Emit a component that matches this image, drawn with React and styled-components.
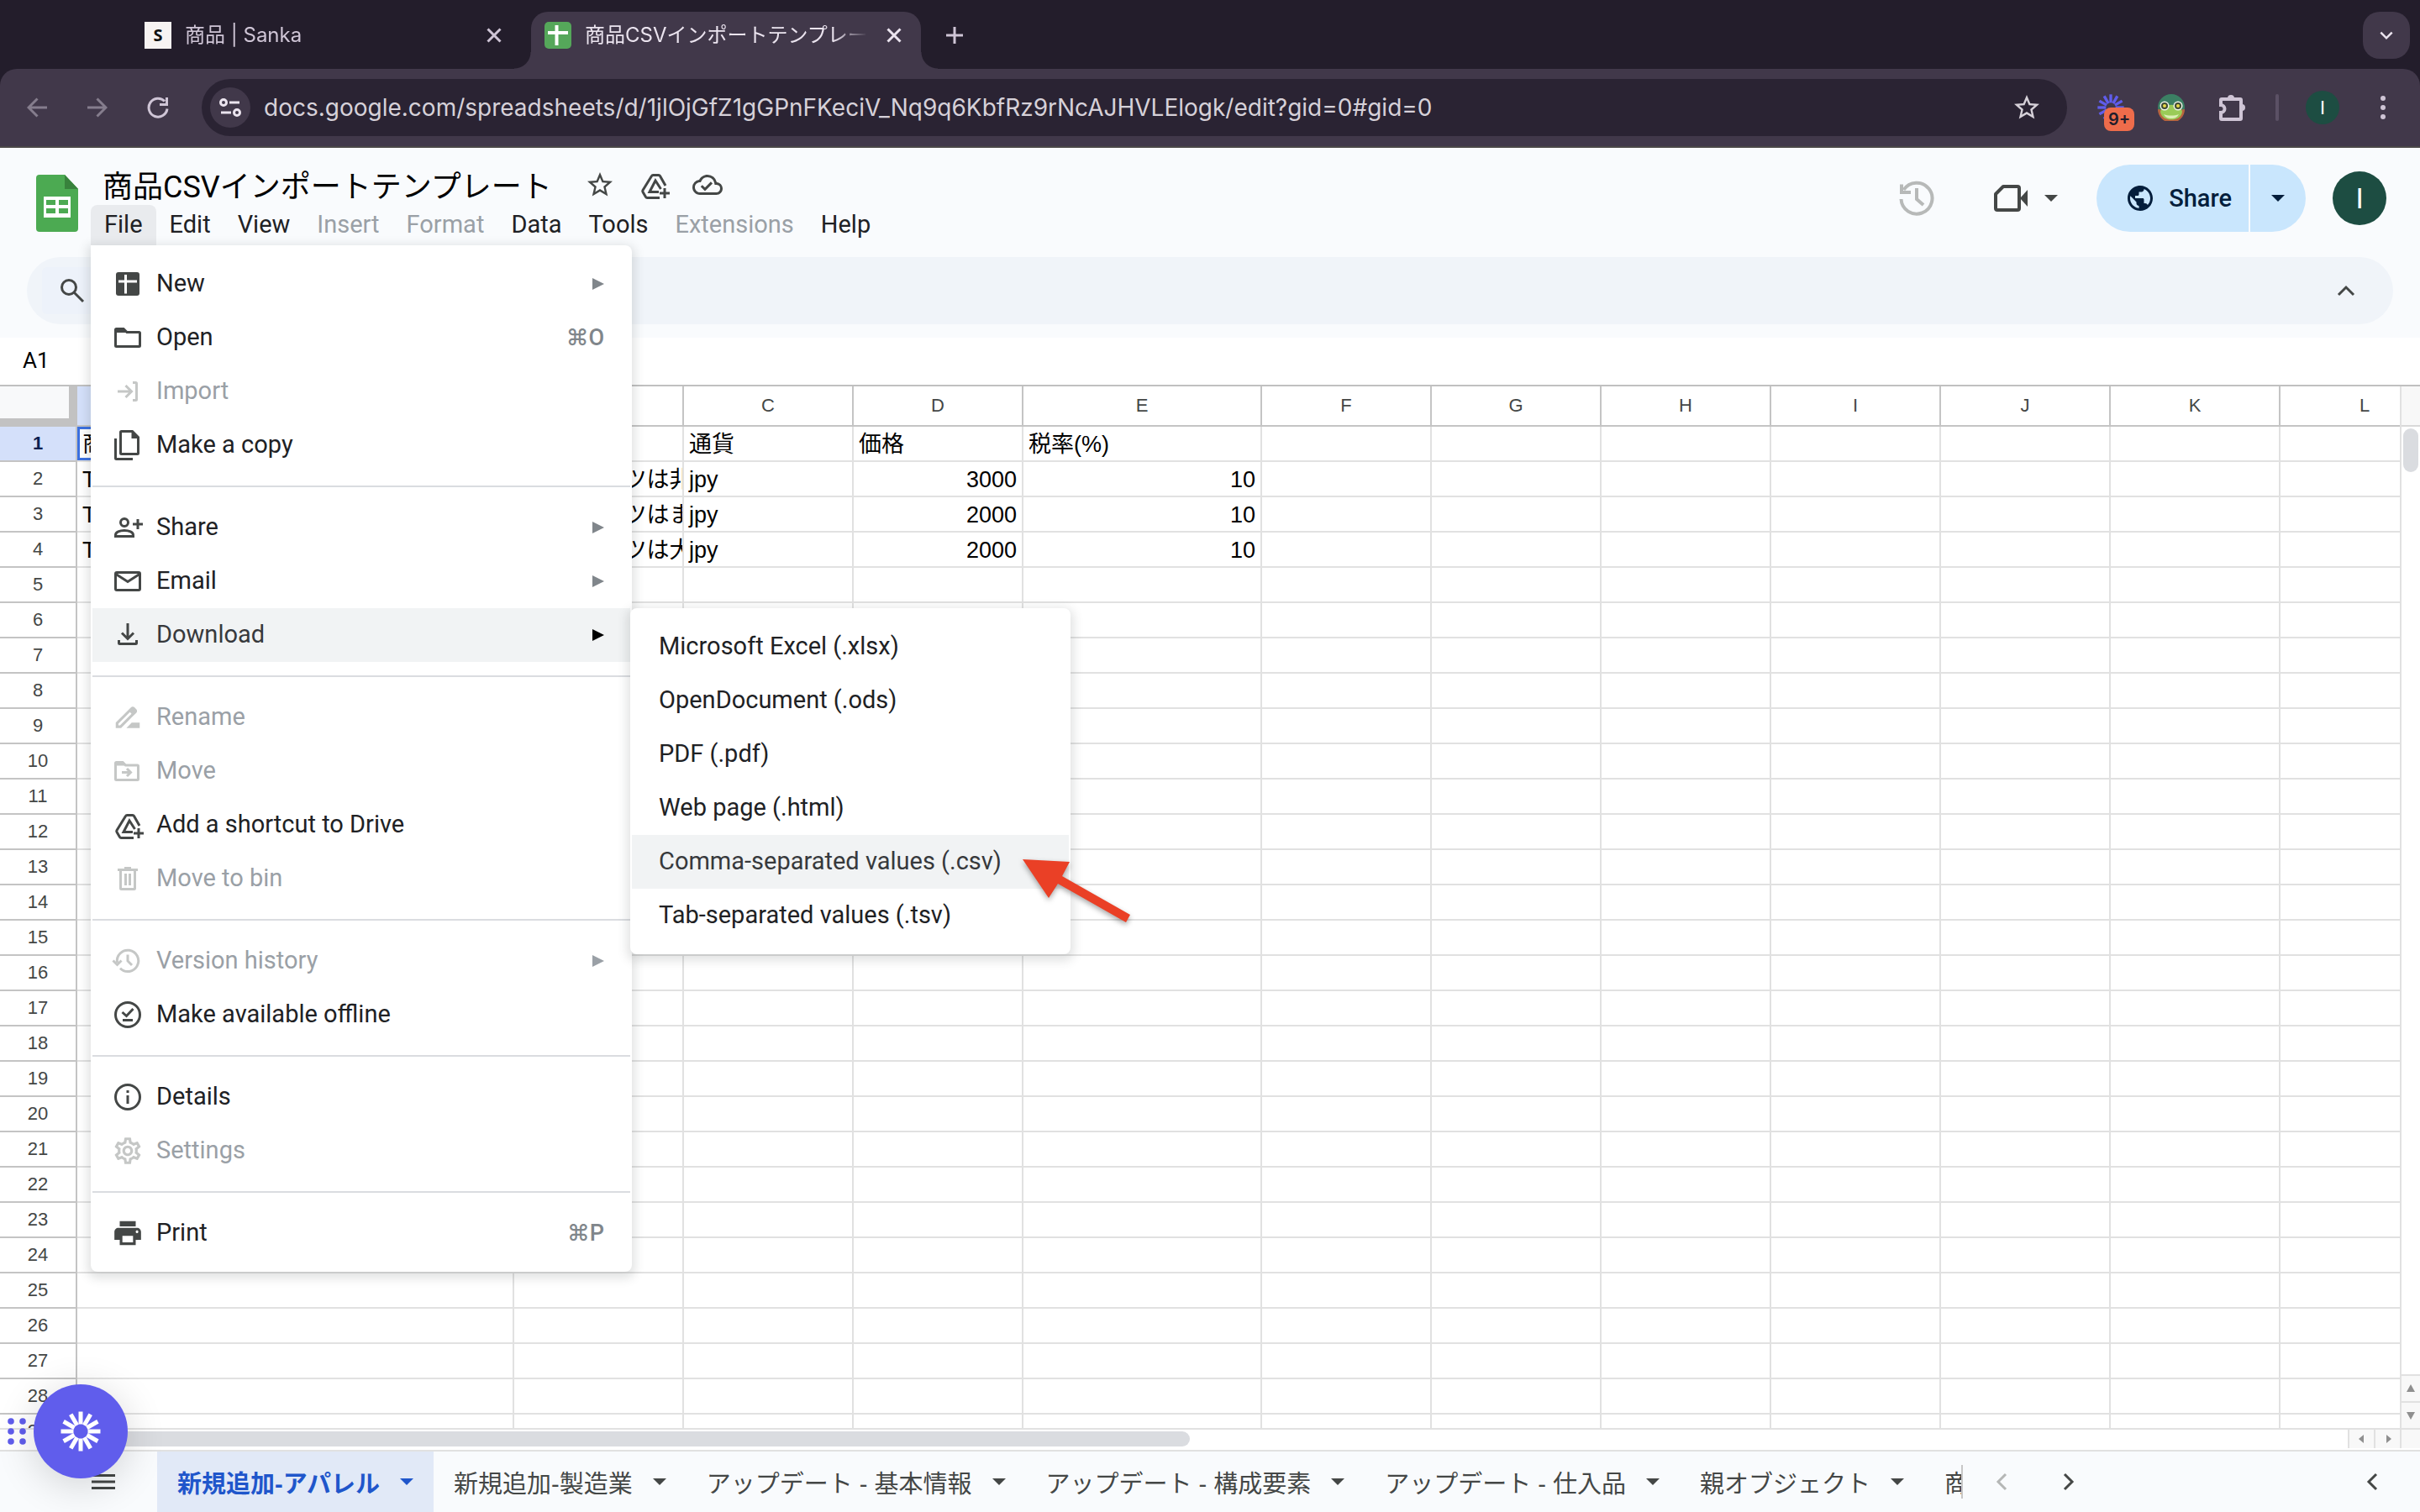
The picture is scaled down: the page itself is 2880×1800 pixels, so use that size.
import React from "react";
import styled, { createGlobalStyle, css } from "styled-components";
import {
  MdStarBorder,
  MdOutlineCloudDone,
  MdPublic,
  MdDriveFileRenameOutline,
  MdOutlineSettings,
  MdPrint,
} from "react-icons/md";

const UI = `Roboto, "Noto Sans CJK JP", sans-serif`;
const CHROME = `Inter, "Noto Sans CJK JP", sans-serif`;
const SHEET = `"Liberation Sans", "Noto Sans CJK JP", sans-serif`;

const GlobalStyle = createGlobalStyle`
  *, *::before, *::after { box-sizing: border-box; }
  body { margin: 0; background: #fff; font-family: ${UI}; }
  button, input { font: inherit; color: inherit; border: 0; margin: 0; padding: 0; background: none; outline: 0; }
  ul { list-style: none; margin: 0; padding: 0; }
  svg { display: block; flex: none; }
`;

const Page = styled.div`
  position: relative;
  display: flex;
  flex-direction: column;
  height: 100vh;
  overflow: hidden;
  background: #fff;
`;

/* ---------- browser chrome ---------- */

const TabStrip = styled.div`
  display: flex;
  align-items: flex-start;
  gap: 12px;
  height: 82px;
  padding: 14px 12px 0 156px;
  background: #231d2b;
  font-family: ${CHROME};
  font-size: 24px;
  color: #cfc5d6;
`;

const BrowserTab = styled.div`
  position: relative;
  display: flex;
  align-items: center;
  gap: 16px;
  width: 464px;
  height: 56px;
  padding: 0 16px;
  ${(p) =>
    p.$active &&
    css`
      height: 68px;
      padding-bottom: 12px;
      border-radius: 20px 20px 0 0;
      background: #41384a;
      color: #ebe4ef;
      &::before,
      &::after {
        content: "";
        position: absolute;
        bottom: 0;
        width: 20px;
        height: 20px;
      }
      &::before {
        right: 100%;
        background: radial-gradient(circle at 0 0, transparent 19px, #41384a 20px);
      }
      &::after {
        left: 100%;
        background: radial-gradient(circle at 100% 0, transparent 19px, #41384a 20px);
      }
    `}
`;

const TabTitle = styled.span`
  flex: 1;
  min-width: 0;
  overflow: hidden;
  white-space: nowrap;
  line-height: 36px;
  mask-image: linear-gradient(to right, #000 88%, transparent);
`;

const TabClose = styled.button`
  display: grid;
  place-items: center;
  width: 32px;
  height: 32px;
`;

const NewTab = styled.button`
  display: grid;
  place-items: center;
  width: 56px;
  height: 56px;
`;

const TabSearch = styled.button`
  display: grid;
  place-items: center;
  width: 56px;
  height: 56px;
  margin-left: auto;
  border-radius: 20px;
  background: #41384a;
  color: #ebe4ef;
`;

const ToolbarBack = styled.div`
  background: #231d2b;
`;

const BrowserToolbar = styled.div`
  display: flex;
  align-items: center;
  height: 94px;
  padding: 0 8px;
  border-bottom: 2px solid #4b4848;
  border-radius: 20px 20px 0 0;
  background: #41384a;
  color: #cfc5d6;
  font-family: ${CHROME};
`;

const ChromeButton = styled.button`
  position: relative;
  display: grid;
  place-items: center;
  width: 72px;
  height: 68px;
  color: ${(p) => (p.$dim ? "#857d8d" : "inherit")};
`;

const Omnibox = styled.div`
  flex: 1;
  display: flex;
  align-items: center;
  gap: 16px;
  height: 68px;
  margin: 0 16px;
  padding: 0 28px 0 10px;
  border-radius: 34px;
  background: #2a2333;
  color: #d6d1d9;
`;

const SiteInfo = styled.button`
  display: grid;
  place-items: center;
  width: 48px;
  height: 48px;
  border-radius: 50%;
  background: #41384a;
  color: #ebe4ef;
`;

const UrlInput = styled.input`
  flex: 1;
  min-width: 0;
  height: 48px;
  font-size: 28px;
`;

const PlainButton = styled.button`
  display: grid;
  place-items: center;
  width: 40px;
  height: 40px;
`;

const ExtBadge = styled.span`
  position: absolute;
  right: 8px;
  bottom: 6px;
  width: 36px;
  height: 28px;
  border-radius: 8px;
  background: #ee6c4b;
  color: #231d2b;
  font-size: 20px;
  font-weight: 600;
  line-height: 28px;
  text-align: center;
`;

const ChromeDivider = styled.span`
  width: 4px;
  height: 32px;
  margin: 0 16px;
  border-radius: 2px;
  background: #5b5165;
`;

const Avatar = styled.span`
  display: grid;
  place-items: center;
  width: ${(p) => p.$size}px;
  height: ${(p) => p.$size}px;
  border-radius: 50%;
  background: #1d4d42;
  color: #fff;
  font-family: ${UI};
  font-size: ${(p) => (p.$size > 50 ? 34 : 22)}px;
`;

/* ---------- document header ---------- */

const DocTop = styled.header`
  background: #f9fbfd;
  padding-bottom: 16px;
`;

const DocHeader = styled.div`
  display: flex;
  height: 130px;
  padding: 20px 40px 0 43px;
`;

const LogoLink = styled.a`
  width: 50px;
  margin: 12px 15px 0 0;
`;

const TitleBlock = styled.div`
  display: flex;
  flex-direction: column;
`;

const TitleRow = styled.div`
  display: flex;
  align-items: center;
  height: 48px;
  padding-left: 14px;
  gap: 24px;
  color: #444746;
`;

const TitleInput = styled.input`
  width: 548px;
  height: 48px;
  padding-bottom: 3px;
  color: #000;
  font-size: 36px;
`;

const TitleButton = styled.button`
  display: grid;
  place-items: center;
  width: 40px;
  height: 40px;
`;

const MenuBar = styled.ul`
  display: flex;
`;

const MenuBarItem = styled.li`
  position: relative;
`;

const MenuBarButton = styled.button`
  height: 48px;
  padding: 0 16px 2px;
  border-radius: 8px 8px 0 0;
  background: ${(p) => (p.$open ? "#e9ebee" : "transparent")};
  color: #202124;
  font-size: 29px;
  &:disabled {
    color: #9aa0a6;
  }
`;

const HeaderActions = styled.div`
  display: flex;
  align-items: center;
  gap: 32px;
  height: 80px;
  margin-left: auto;
`;

const HistoryButton = styled.button`
  display: grid;
  place-items: center;
  width: 80px;
  height: 80px;
  color: #b7b9b8;
`;

const MeetButton = styled.button`
  display: flex;
  align-items: center;
  gap: 19px;
  height: 80px;
  padding: 0 14px 0 19px;
  color: #444746;
`;

const Caret = styled.span`
  flex: none;
  border: 8px solid transparent;
  border-top-color: currentColor;
  border-bottom: 0;
`;

const ShareGroup = styled.div`
  display: flex;
  gap: 2px;
  height: 80px;
  border-radius: 40px;
  overflow: hidden;
  color: #041e3c;
`;

const ShareButton = styled.button`
  display: flex;
  align-items: center;
  gap: 16px;
  padding: 0 20px 0 34px;
  background: #c9e6fd;
  font-size: 29px;
  font-weight: 500;
`;

const ShareMore = styled.button`
  display: grid;
  place-items: center;
  width: 66px;
  background: #c9e6fd;
`;

const ActionBar = styled.div`
  display: flex;
  align-items: center;
  justify-content: space-between;
  height: 80px;
  margin: 0 32px;
  padding: 0 36px 0 18px;
  border-radius: 40px;
  background: #f0f4f9;
  color: #444746;
`;

const SearchMenus = styled.button`
  display: flex;
  align-items: center;
  width: 200px;
  height: 56px;
  padding-left: 20px;
  border-radius: 6px;
  background: #edf2fa;
`;

/* ---------- dropdown menus ---------- */

const MenuPanel = styled.div`
  position: absolute;
  z-index: 5;
  left: ${(p) => (p.$sub ? "100%" : "0")};
  top: ${(p) => (p.$sub ? "0" : "48px")};
  width: ${(p) => (p.$sub ? 524 : 644)}px;
  padding: 14px 2px;
  border-radius: ${(p) => (p.$sub ? "8px" : "0 8px 8px 8px")};
  background: #fff;
  box-shadow: 0 4px 12px 4px rgba(60, 64, 67, 0.15);
`;

const MenuGroup = styled.ul`
  & + & {
    margin-top: 16px;
    padding-top: 16px;
    border-top: 2px solid #dadce0;
  }
`;

const MenuItem = styled.li`
  position: relative;
`;

const MenuItemButton = styled.button`
  display: flex;
  align-items: center;
  width: 100%;
  height: 64px;
  padding: 0 31px 0 ${(p) => (p.$sub ? 32 : 22)}px;
  background: ${(p) => (p.$hover ? "#f1f3f4" : "transparent")};
  color: ${(p) => (p.$hover ? "#37393c" : "#202124")};
  font-size: 29px;
  text-align: left;
  white-space: nowrap;
  svg {
    width: 40px;
    margin-right: 14px;
    color: #444746;
  }
  &:disabled {
    color: #9aa0a6;
  }
  &:disabled svg {
    color: #c5c7c6;
  }
`;

const MenuLabel = styled.span`
  padding-bottom: 2px;
`;

const Shortcut = styled.kbd`
  margin-left: auto;
  padding-bottom: 2px;
  color: #80868b;
  font-family: Roboto, Inter, sans-serif;
  font-size: 27px;
  font-weight: 500;
`;

const SubArrow = styled.span`
  margin-left: auto;
  border: 7px solid transparent;
  border-left: 14px solid ${(p) => p.$tone};
  border-right: 0;
`;

const Pointer = styled.svg`
  position: absolute;
  z-index: 6;
  left: 460px;
  top: 24px;
  filter: drop-shadow(0 3px 3px rgba(0, 0, 0, 0.35));
`;

/* ---------- sheet ---------- */

const FormulaBar = styled.div`
  display: flex;
  height: 58px;
  padding-bottom: 2px;
  border-bottom: 2px solid #c0c0c0;
`;

const NameBox = styled.input`
  width: 200px;
  padding-left: 27px;
  font-size: 26px;
  color: #000;
`;

const FormulaInput = styled.input`
  flex: 1;
  min-width: 0;
`;

const GridArea = styled.div`
  flex: 1;
  min-height: 0;
  display: flex;
`;

const GridView = styled.main`
  flex: 1;
  min-width: 0;
  overflow: hidden;
`;

const Sheet = styled.table`
  width: 2916px;
  table-layout: fixed;
  border-collapse: separate;
  border-spacing: 0;
  font-family: ${SHEET};
`;

const Corner = styled.td`
  height: 48px;
  padding: 0;
  border-right: 10px solid #c2c2c2;
  border-bottom: 10px solid #c2c2c2;
  background: #f8f9fa;
`;

const ColHead = styled.th`
  height: 48px;
  padding: 0;
  border-right: 2px solid #c4c4c4;
  border-bottom: 2px solid #c4c4c4;
  background: ${(p) => (p.$selected ? "#d4e0fa" : "#fff")};
  color: #444746;
  font-size: 22px;
  font-weight: 400;
  line-height: 46px;
`;

const RowHead = styled.th`
  padding: 0;
  border-right: 2px solid #c4c4c4;
  border-bottom: 2px solid #c4c4c4;
  background: ${(p) => (p.$selected ? "#d4e0fa" : "#fff")};
  color: ${(p) => (p.$selected ? "#0b1f4f" : "#444746")};
  font-size: 22px;
  font-weight: ${(p) => (p.$selected ? 700 : 400)};
  line-height: 38px;
  height: 42px;
`;

const Cell = styled.td`
  height: 42px;
  padding: 2px 6px 0;
  border-right: 2px solid #e1e1e1;
  border-bottom: 2px solid #e1e1e1;
  color: #000;
  font-size: 27px;
  line-height: 38px;
  text-align: ${(p) => (p.$num ? "right" : "left")};
  white-space: nowrap;
  overflow: hidden;
  ${(p) =>
    p.$selected &&
    css`
      box-shadow: inset 0 0 0 3px #3b70e0;
    `}
`;

const VScroll = styled.div`
  display: flex;
  flex-direction: column;
  width: 24px;
  border-left: 2px solid #e1e1e1;
`;

const VScrollHead = styled.div`
  height: 48px;
  border-bottom: 2px solid #d9d9d9;
  background: #f8f8f8;
`;

const VThumb = styled.div`
  height: 52px;
  margin: 2px 2px auto;
  border-radius: 9px;
  background: #dadce0;
`;

const ScrollStep = styled.button`
  display: grid;
  place-items: center;
  background: #f8f8f8;
  color: #8f8f8f;
  ${(p) =>
    p.$side
      ? css`
          width: 31px;
          border-left: 2px solid #e1e1e1;
        `
      : css`
          height: 32px;
          border-top: 2px solid #e1e1e1;
        `}
`;

const HScroll = styled.div`
  display: flex;
  height: 28px;
  padding-bottom: 2px;
  border-top: 2px solid #e1e1e1;
  border-bottom: 2px solid #e1e1e1;
`;

const HTrack = styled.div`
  flex: 1;
  padding: 2px 0 2px 92px;
`;

const HThumb = styled.div`
  width: 49%;
  height: 18px;
  border-radius: 9px;
  background: #dadce0;
`;

const ScrollCorner = styled.div`
  width: 24px;
  border-left: 2px solid #e1e1e1;
  background: #f8f8f8;
`;

/* ---------- sheet tabs ---------- */

const SheetBar = styled.footer`
  display: flex;
  align-items: center;
  height: 72px;
  padding-left: 87px;
  background: #f9fbfd;
  color: #444746;
`;

const AllSheets = styled.button`
  display: grid;
  place-items: center;
  width: 72px;
  height: 72px;
  margin-right: 28px;
`;

const SheetTabs = styled.div`
  flex: 1;
  display: flex;
  min-width: 0;
  overflow: hidden;
`;

const SheetTab = styled.button`
  flex: none;
  display: flex;
  align-items: center;
  gap: 24px;
  height: 72px;
  padding: 0 24px;
  background: ${(p) => (p.$active ? "#e1e9f7" : "transparent")};
  color: ${(p) => (p.$active ? "#1f56cb" : "#444746")};
  font-family: ${SHEET};
  font-size: 29px;
  font-weight: ${(p) => (p.$active ? 700 : 400)};
  white-space: nowrap;
`;

const SheetNav = styled.div`
  display: flex;
  align-items: center;
  width: 546px;
  padding-right: 17px;
`;

const NavDivider = styled.span`
  width: 2px;
  height: 40px;
  margin-right: 6px;
  background: #c7c7c7;
`;

const NavButton = styled.button`
  display: grid;
  place-items: center;
  width: 80px;
  height: 72px;
  margin-left: ${(p) => (p.$end ? "auto" : "0")};
  color: ${(p) => (p.$dim ? "#b5b7b6" : "#444746")};
`;

/* ---------- floating assistant ---------- */

const Assistant = styled.div`
  position: absolute;
  z-index: 8;
  left: 8px;
  bottom: 40px;
  display: flex;
  align-items: center;
  gap: 8px;
`;

const AssistantButton = styled.button`
  display: grid;
  place-items: center;
  width: 112px;
  height: 112px;
  border-radius: 50%;
  background: #605dec;
  box-shadow: 0 8px 48px rgba(0, 0, 0, 0.16);
`;

/* ---------- drawings ---------- */

const Line = ({ size = 40, box = size, w = 3, children }) => (
  <svg width={size} height={size} viewBox={`0 0 ${box} ${box}`} fill="none" stroke="currentColor" strokeWidth={w}>
    {children}
  </svg>
);

const IconNew = () => (
  <Line>
    <rect x="6" y="6" width="28" height="28" rx="3" fill="currentColor" stroke="none" />
    <path d="M17.500 9v22.500M9 17h22" stroke="#fff" />
  </Line>
);
const IconFolder = () => (
  <Line>
    <path d="M5.500 12V10.500a1 1 0 0 1 1-1H15l4 4h14.500a1 1 0 0 1 1 1v15a1 1 0 0 1-1 1h-27a1 1 0 0 1-1-1z" />
    <path d="M5 9h10l4.500 5H5z" fill="currentColor" stroke="none" />
  </Line>
);
const IconImport = () => (
  <Line>
    <path d="M8 20h16M17.500 13l7 7-7 7M26 9.500h3.500a1 1 0 0 1 1 1v19a1 1 0 0 1-1 1H26" />
  </Line>
);
const IconCopy = () => (
  <Line>
    <path d="M12.500 3.500h13l7 7v19a1 1 0 0 1-1 1h-19a1 1 0 0 1-1-1v-25a1 1 0 0 1 1-1z" />
    <path d="M24.500 3.500v8.500H33z" fill="currentColor" stroke="none" />
    <path d="M5.500 12v23.500a1 1 0 0 0 1 1H26" />
  </Line>
);
const IconPersonAdd = () => (
  <Line>
    <circle cx="16" cy="14" r="4.500" />
    <path d="M5.500 30.500v-1.500c0-3.500 5-5.500 10.500-5.500s10.500 2 10.500 5.500v1.500zM32 10v12M26 16h12" />
  </Line>
);
const IconMail = () => (
  <Line>
    <rect x="5.500" y="9.500" width="29" height="21" rx="1.500" />
    <path d="M6 11.500l14 9 14-9" />
  </Line>
);
const IconDownload = () => (
  <Line>
    <path d="M20 6v18M13 17.500l7 7 7-7M9.500 26v3.500a1 1 0 0 0 1 1h19a1 1 0 0 0 1-1V26" />
  </Line>
);
const IconMove = () => (
  <Line>
    <path d="M5.500 12V10.500a1 1 0 0 1 1-1H14l3.500 3.500h14a1 1 0 0 1 1 1v15.500a1 1 0 0 1-1 1h-25a1 1 0 0 1-1-1z" />
    <path d="M5 9h9.500l4 4.500H5z" fill="currentColor" stroke="none" />
    <path d="M13 21.500h10M19 17l4.500 4.500-4.500 4.500" />
  </Line>
);
const IconDriveAdd = () => (
  <Line>
    <path d="M34 21L27.500 9.500a2 2 0 0 0-1.700-1h-6.600a2 2 0 0 0-1.700 1L7 26.500a2 2 0 0 0 0 2l3.500 6a2 2 0 0 0 1.700 1H27" />
    <path d="M28.500 25L22 15l-7 13.500h11M33 24v12M27 30h12" />
  </Line>
);
const IconTrash = () => (
  <Line>
    <path d="M8 9.500h24M16 7.500h8M11.500 10v21.500a1 1 0 0 0 1 1h15a1 1 0 0 0 1-1V10M17.500 14v14M22.500 14v14" />
  </Line>
);
const IconVersion = () => (
  <Line>
    <path d="M7.500 22A12.700 12.700 0 1 1 11 28.800M20 12.500V20l5 5M2.500 19.500l5 5 5-5" />
  </Line>
);
const IconOffline = () => (
  <Line>
    <circle cx="20" cy="20" r="14.500" />
    <path d="M13.500 17l5 4.500 8-8.500M14 26.500h12" />
  </Line>
);
const IconInfo = () => (
  <Line>
    <circle cx="20" cy="20" r="14.500" />
    <path d="M20 18v10M20 12v3" />
  </Line>
);
const IconCross = ({ size = 20 }) => (
  <Line size={size} box={20}>
    <path d="M2.500 2.500l15 15M17.500 2.500l-15 15" />
  </Line>
);
const Chevron = ({ d, size = 24 }) => (
  <Line size={size} box={24}>
    <path d={{ up: "M3 17l9-9 9 9", down: "M4 8l8 8 8-8", left: "M17 3l-9 9 9 9", right: "M7 3l9 9-9 9" }[d]} />
  </Line>
);
const Tri = ({ d }) => (
  <svg width="12" height="12" viewBox="0 0 12 12" fill="currentColor">
    <path d={{ up: "M6 1l5 9H1z", down: "M6 11L1 2h10z", left: "M2 6l6-5v10z", right: "M10 6L4 1v10z" }[d]} />
  </svg>
);

const Burst = ({ size, color, count = 12 }) => (
  <svg width={size} height={size} viewBox="-24 -24 48 48" stroke={color} strokeWidth="5">
    {Array.from({ length: count }, (_, i) => (
      <line key={i} x1="0" y1="-8.500" x2="0" y2="-23.500" transform={`rotate(${i * 30})`} />
    ))}
  </svg>
);

const FrogIcon = () => (
  <svg width="32" height="32" viewBox="0 0 32 32">
    <circle cx="16" cy="16" r="16" fill="#3b7f63" />
    <path d="M0 18c4 1 28 1 32 0a16 16 0 0 1-32 0z" fill="#b8643e" />
    <path d="M3 21c2-11 24-11 26 0-1 7-7 9.500-13 9.500S4 28 3 21z" fill="#9acb57" />
    <path d="M7 24c5 2 13 2 18 0-2 4-5 5-9 5s-7-1-9-5z" fill="#dbeeb4" />
    <circle cx="8" cy="14" r="5.500" fill="#eef3ea" />
    <circle cx="24" cy="14" r="5.500" fill="#eef3ea" />
    <circle cx="8" cy="14" r="4" fill="#3f4b32" />
    <circle cx="24" cy="14" r="4" fill="#3f4b32" />
    <circle cx="8" cy="14" r="2" fill="#e8d94a" />
    <circle cx="24" cy="14" r="2" fill="#e8d94a" />
  </svg>
);

const SheetsLogo = () => (
  <svg width="50" height="68" viewBox="0 0 50 68">
    <path d="M4 0h30l16 17v47a4 4 0 0 1-4 4H4a4 4 0 0 1-4-4V4a4 4 0 0 1 4-4z" fill="#4caa52" />
    <path d="M34 0l16 17H34z" fill="#38823c" />
    <path fillRule="evenodd" d="M9 26h32v25H9zM12 30v6h11v-6zM27 30v6h11v-6zM12 40v6h11v-6zM27 40v6h11v-6z" fill="#fff" />
  </svg>
);

/* ---------- data ---------- */

const fileMenu = [
  [
    { label: "New", icon: IconNew, arrow: true },
    { label: "Open", icon: IconFolder, keys: "⌘O" },
    { label: "Import", icon: IconImport, disabled: true },
    { label: "Make a copy", icon: IconCopy },
  ],
  [
    { label: "Share", icon: IconPersonAdd, arrow: true },
    { label: "Email", icon: IconMail, arrow: true },
    { label: "Download", icon: IconDownload, arrow: true, open: true },
  ],
  [
    { label: "Rename", icon: () => <MdDriveFileRenameOutline size={38} />, disabled: true },
    { label: "Move", icon: IconMove, disabled: true },
    { label: "Add a shortcut to Drive", icon: IconDriveAdd },
    { label: "Move to bin", icon: IconTrash, disabled: true },
  ],
  [
    { label: "Version history", icon: IconVersion, arrow: true, disabled: true },
    { label: "Make available offline", icon: IconOffline },
  ],
  [
    { label: "Details", icon: IconInfo },
    { label: "Settings", icon: () => <MdOutlineSettings size={38} />, disabled: true },
  ],
  [{ label: "Print", icon: () => <MdPrint size={38} />, keys: "⌘P" }],
];

const downloadFormats = [
  "Microsoft Excel (.xlsx)",
  "OpenDocument (.ods)",
  "PDF (.pdf)",
  "Web page (.html)",
  "Comma-separated values (.csv)",
  "Tab-separated values (.tsv)",
];

const columns = [
  ["A", 520],
  ["B", 202],
  ["C", 202],
  ["D", 202],
  ["E", 284],
  ...["F", "G", "H", "I", "J", "K", "L"].map((c) => [c, 202]),
];

const rows = [
  ["商品名", "商品説明", "通貨", "価格", "税率(%)"],
  ["Tシャツ 1", "このTシャツは非常に", "jpy", 3000, 10],
  ["Tシャツ 2", "このTシャツはまさに", "jpy", 2000, 10],
  ["Tシャツ 3", "このTシャツは大人気", "jpy", 2000, 10],
];

const sheetNames = [
  "新規追加-アパレル",
  "新規追加-製造業",
  "アップデート - 基本情報",
  "アップデート - 構成要素",
  "アップデート - 仕入品",
  "親オブジェクト",
  "商品グループ",
];

const docMenus = ["File", "Edit", "View", "Insert", "Format", "Data", "Tools", "Extensions", "Help"];
const disabledMenus = ["Insert", "Format", "Extensions"];

/* ---------- parts ---------- */

function DownloadMenu() {
  return (
    <MenuPanel $sub role="menu">
      <MenuGroup>
        {downloadFormats.map((name) => {
          const hover = name.includes(".csv");
          return (
            <MenuItem key={name}>
              <MenuItemButton $sub $hover={hover}>
                <MenuLabel>{name}</MenuLabel>
              </MenuItemButton>
              {hover && (
                <Pointer width="140" height="90" viewBox="0 0 140 90" aria-hidden="true">
                  <path d="M5 5l56 3-9 17 81 46-5 9-81-46-11 17z" fill="#ea4026" />
                </Pointer>
              )}
            </MenuItem>
          );
        })}
      </MenuGroup>
    </MenuPanel>
  );
}

function FileMenu() {
  return (
    <MenuPanel role="menu">
      {fileMenu.map((group) => (
        <MenuGroup key={group[0].label}>
          {group.map(({ label, icon: Icon, arrow, keys, disabled, open }) => (
            <MenuItem key={label}>
              <MenuItemButton disabled={disabled} $hover={open}>
                <Icon />
                <MenuLabel>{label}</MenuLabel>
                {keys && <Shortcut>{keys}</Shortcut>}
                {arrow && <SubArrow $tone={open ? "#000" : disabled ? "#9aa0a6" : "#80868b"} />}
              </MenuItemButton>
              {open && <DownloadMenu />}
            </MenuItem>
          ))}
        </MenuGroup>
      ))}
    </MenuPanel>
  );
}

function BrowserChrome() {
  return (
    <>
      <TabStrip>
        <BrowserTab>
          <svg width="32" height="32" viewBox="0 0 32 32">
            <rect width="32" height="32" fill="#f7f3f2" />
            <text x="16" y="23" fontFamily="Open Sans, sans-serif" fontWeight="700" fontSize="20" textAnchor="middle" fill="#111">S</text>
          </svg>
          <TabTitle>商品 | Sanka</TabTitle>
          <TabClose aria-label="Close tab"><IconCross /></TabClose>
        </BrowserTab>
        <BrowserTab $active>
          <svg width="32" height="32" viewBox="0 0 32 32">
            <rect width="32" height="32" rx="5" fill="#55a75a" />
            <path d="M14.500 4v24M4 13h24" stroke="#fff" strokeWidth="4" />
          </svg>
          <TabTitle>商品CSVインポートテンプレート</TabTitle>
          <TabClose aria-label="Close tab"><IconCross /></TabClose>
        </BrowserTab>
        <NewTab aria-label="New tab">
          <Line size={20}><path d="M10 0v20M0 10h20" /></Line>
        </NewTab>
        <TabSearch aria-label="Search tabs"><Chevron d="down" size={20} /></TabSearch>
      </TabStrip>
      <ToolbarBack>
        <BrowserToolbar>
          <ChromeButton $dim aria-label="Back">
            <Line size={24}><path d="M24 12H2M12.500 1.500L2 12l10.500 10.500" /></Line>
          </ChromeButton>
          <ChromeButton $dim aria-label="Forward">
            <Line size={24}><path d="M0 12h22M11.500 1.500L22 12 11.500 22.500" /></Line>
          </ChromeButton>
          <ChromeButton aria-label="Reload">
            <Line size={26}><path d="M24 14.500A11 11 0 1 1 21 5.500M23.500 1v8.500H15" /></Line>
          </ChromeButton>
          <Omnibox>
            <SiteInfo aria-label="Site information">
              <Line size={26}>
                <circle cx="5" cy="7" r="3.500" /><path d="M12 7h12" />
                <circle cx="21" cy="19" r="3.500" /><path d="M2 19h12" />
              </Line>
            </SiteInfo>
            <UrlInput
              aria-label="Address"
              defaultValue="docs.google.com/spreadsheets/d/1jlOjGfZ1gGPnFKeciV_Nq9q6KbfRz9rNcAJHVLElogk/edit?gid=0#gid=0"
            />
            <PlainButton aria-label="Bookmark"><MdStarBorder size={36} /></PlainButton>
          </Omnibox>
          <ChromeButton aria-label="Assistant extension">
            <Burst size={32} color="#605dec" />
            <ExtBadge>9+</ExtBadge>
          </ChromeButton>
          <ChromeButton aria-label="Frog extension"><FrogIcon /></ChromeButton>
          <ChromeButton aria-label="Extensions">
            <Line size={34} w={4}>
              <path d="M4 8a1 1 0 0 1 1-1h22a1 1 0 0 1 1 1v22a1 1 0 0 1-1 1H5a1 1 0 0 1-1-1v-7a4.500 4.500 0 0 0 0-9z" />
              <path d="M12 6a4 4 0 0 1 8 0zM29 13a4 4 0 0 1 0 8z" fill="currentColor" stroke="none" />
            </Line>
          </ChromeButton>
          <ChromeDivider />
          <ChromeButton aria-label="Profile"><Avatar $size={40}>I</Avatar></ChromeButton>
          <ChromeButton aria-label="Browser menu">
            <svg width="8" height="30" viewBox="0 0 8 30" fill="currentColor">
              <circle cx="4" cy="4" r="3" /><circle cx="4" cy="15" r="3" /><circle cx="4" cy="26" r="3" />
            </svg>
          </ChromeButton>
        </BrowserToolbar>
      </ToolbarBack>
    </>
  );
}

function DocumentHeader() {
  return (
    <DocTop>
      <DocHeader>
        <LogoLink href="#home" aria-label="Sheets home"><SheetsLogo /></LogoLink>
        <TitleBlock>
          <TitleRow>
            <TitleInput aria-label="Document title" defaultValue="商品CSVインポートテンプレート" />
            <TitleButton aria-label="Star"><MdStarBorder size={36} /></TitleButton>
            <TitleButton aria-label="Add shortcut to Drive"><IconDriveAdd /></TitleButton>
            <TitleButton aria-label="Document status"><MdOutlineCloudDone size={36} /></TitleButton>
          </TitleRow>
          <MenuBar>
            {docMenus.map((name) => (
              <MenuBarItem key={name}>
                <MenuBarButton $open={name === "File"} disabled={disabledMenus.includes(name)}>{name}</MenuBarButton>
                {name === "File" && <FileMenu />}
              </MenuBarItem>
            ))}
          </MenuBar>
        </TitleBlock>
        <HeaderActions>
          <HistoryButton aria-label="Version history">
            <Line size={44} w={4}>
              <path d="M3.500 23A18.500 18.500 0 1 0 6.500 12M4 5.500V15h11M22 10v13l8 7" />
            </Line>
          </HistoryButton>
          <MeetButton aria-label="Join a call">
            <svg width="42" height="36" viewBox="0 0 42 36" fill="none" stroke="currentColor" strokeWidth="4">
              <path d="M12 4h17a2 2 0 0 1 2 2v24a2 2 0 0 1-2 2H5a2 2 0 0 1-2-2V13z" strokeLinejoin="round" />
              <path d="M32 18l9-10v20z" fill="currentColor" stroke="none" />
            </svg>
            <Caret />
          </MeetButton>
          <ShareGroup>
            <ShareButton><MdPublic size={36} />Share</ShareButton>
            <ShareMore aria-label="Quick sharing actions"><Caret /></ShareMore>
          </ShareGroup>
          <Avatar $size={64}>I</Avatar>
        </HeaderActions>
      </DocHeader>
      <ActionBar>
        <SearchMenus aria-label="Search the menus">
          <Line size={32}><circle cx="12" cy="12" r="8.500" /><path d="M18 18l11 11" /></Line>
        </SearchMenus>
        <PlainButton aria-label="Hide the menus"><Chevron d="up" /></PlainButton>
      </ActionBar>
    </DocTop>
  );
}

function SheetGrid() {
  return (
    <>
      <FormulaBar>
        <NameBox aria-label="Name box" defaultValue="A1" />
        <FormulaInput aria-label="Formula" />
      </FormulaBar>
      <GridArea>
        <GridView>
          <Sheet>
            <colgroup>
              <col style={{ width: 92 }} />
              {columns.map(([name, width]) => <col key={name} style={{ width }} />)}
            </colgroup>
            <thead>
              <tr>
                <Corner />
                {columns.map(([name]) => <ColHead key={name} scope="col" $selected={name === "A"}>{name}</ColHead>)}
              </tr>
            </thead>
            <tbody>
              {Array.from({ length: 29 }, (_, r) => (
                <tr key={r}>
                  <RowHead scope="row" $selected={r === 0}>{r + 1}</RowHead>
                  {columns.map(([name], c) => {
                    const value = rows[r]?.[c];
                    return (
                      <Cell key={name} $num={typeof value === "number"} $selected={r === 0 && c === 0}>{value}</Cell>
                    );
                  })}
                </tr>
              ))}
            </tbody>
          </Sheet>
        </GridView>
        <VScroll>
          <VScrollHead />
          <VThumb />
          <ScrollStep aria-label="Scroll up"><Tri d="up" /></ScrollStep>
          <ScrollStep aria-label="Scroll down"><Tri d="down" /></ScrollStep>
        </VScroll>
      </GridArea>
      <HScroll>
        <HTrack><HThumb /></HTrack>
        <ScrollStep $side aria-label="Scroll left"><Tri d="left" /></ScrollStep>
        <ScrollStep $side aria-label="Scroll right"><Tri d="right" /></ScrollStep>
        <ScrollCorner />
      </HScroll>
    </>
  );
}

function SheetTabBar() {
  return (
    <SheetBar>
      <AllSheets aria-label="All sheets">
        <svg width="28" height="20" viewBox="0 0 28 20" stroke="currentColor" strokeWidth="3">
          <path d="M0 2.500h28M0 10h28M0 17.500h28" />
        </svg>
      </AllSheets>
      <SheetTabs>
        {sheetNames.map((name, i) => (
          <SheetTab key={name} $active={i === 0}>
            {name}
            <Caret />
          </SheetTab>
        ))}
      </SheetTabs>
      <SheetNav>
        <NavDivider />
        <NavButton $dim aria-label="Scroll tabs left"><Chevron d="left" /></NavButton>
        <NavButton aria-label="Scroll tabs right"><Chevron d="right" /></NavButton>
        <NavButton $end aria-label="Show side panel"><Chevron d="left" /></NavButton>
      </SheetNav>
    </SheetBar>
  );
}

export default function App() {
  return (
    <Page>
      <GlobalStyle />
      <BrowserChrome />
      <DocumentHeader />
      <SheetGrid />
      <SheetTabBar />
      <Assistant>
        <svg width="24" height="34" viewBox="0 0 24 34" fill="#605dec">
          {[5, 17, 29].map((y) => (
            <g key={y}><circle cx="5" cy={y} r="3.800" /><circle cx="19" cy={y} r="3.800" /></g>
          ))}
        </svg>
        <AssistantButton aria-label="Open assistant"><Burst size={48} color="#fff" /></AssistantButton>
      </Assistant>
    </Page>
  );
}
